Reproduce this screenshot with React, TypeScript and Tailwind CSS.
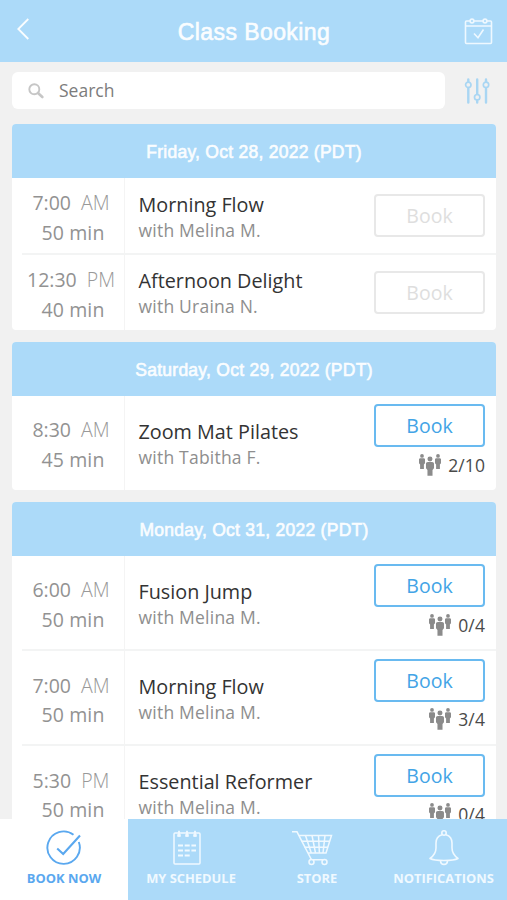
import React from 'react';

type Session = { time: string; half: string; mins: string; name: string; coach: string; spots?: string };
type Day = { title: string; sessions: Session[] };

const days: Day[] = [
  {
    title: 'Friday, Oct 28, 2022 (PDT)',
    sessions: [
      { time: '7:00', half: 'AM', mins: '50 min', name: 'Morning Flow', coach: 'with Melina M.' },
      { time: '12:30', half: 'PM', mins: '40 min', name: 'Afternoon Delight', coach: 'with Uraina N.' },
    ],
  },
  {
    title: 'Saturday, Oct 29, 2022 (PDT)',
    sessions: [{ time: '8:30', half: 'AM', mins: '45 min', name: 'Zoom Mat Pilates', coach: 'with Tabitha F.', spots: '2/10' }],
  },
  {
    title: 'Monday, Oct 31, 2022 (PDT)',
    sessions: [
      { time: '6:00', half: 'AM', mins: '50 min', name: 'Fusion Jump', coach: 'with Melina M.', spots: '0/4' },
      { time: '7:00', half: 'AM', mins: '50 min', name: 'Morning Flow', coach: 'with Melina M.', spots: '3/4' },
      { time: '5:30', half: 'PM', mins: '50 min', name: 'Essential Reformer', coach: 'with Melina M.', spots: '0/4' },
    ],
  },
];

function Person() {
  return (
    <>
      <circle cx="3" cy="1.9" r="1.9" />
      <path d="M1.400 4.200h3.200c.9 0 1.400.6 1.400 1.400v3.600L4.900 10.500V15H1.100v-4.500L0 9.200V5.600c0-.8.5-1.400 1.400-1.400z" />
    </>
  );
}

function PeopleIcon() {
  return (
    <svg className="h-[22px] w-[22px] shrink-0" viewBox="0 0 22 22" fill="#8b8b8b">
      <Person />
      <g transform="translate(16 0)">
        <Person />
      </g>
      <g transform="translate(7 2.600) scale(1.330 1.270)">
        <Person />
      </g>
    </svg>
  );
}

function Row({ s, first }: { s: Session; first: boolean }) {
  const open = Boolean(s.spots);
  const height = open ? (first ? 'h-[94px]' : 'h-[95px]') : 'h-[76px]';
  const buttonTop = open ? (first ? 'pt-2' : 'pt-[9px]') : first ? 'pt-4' : 'pt-[17px]';
  return (
    <div className={`relative flex ${height}`}>
      {!first && <div className="absolute top-[-1px] right-0 left-[10px] h-0.5 bg-[#f3f4f4]" />}
      <div
        className={`flex w-[113px] shrink-0 flex-col items-center justify-center border-r border-[#f4f4f4] pl-[10px] text-[19.5px] leading-[29.5px] text-[#929292] ${
          first ? 'pt-[3px]' : 'pt-[5px]'
        }`}
      >
        <div className="-ml-1 flex gap-[10px]">
          <span>{s.time}</span>
          <span className="font-light text-[#999]">{s.half}</span>
        </div>
        <div className="tracking-[0.1px]">{s.mins}</div>
      </div>
      <div className={`flex min-w-0 flex-1 flex-col justify-center pl-[13.5px] ${first ? 'pt-px' : 'pt-[2px]'}`}>
        <div className="text-[19.8px] leading-[26px] whitespace-nowrap text-[#333]">{s.name}</div>
        <div className="text-[17.5px] leading-[24px] tracking-[0.22px] whitespace-nowrap text-[#8e8e8e]">{s.coach}</div>
      </div>
      <div className={`flex w-[122px] shrink-0 flex-col items-end pr-[11px] ${buttonTop}`}>
        <button
          className={`flex h-[43px] w-[111px] shrink-0 items-center justify-center rounded-[4px] border-2 pt-px text-[19.5px] ${
            open ? 'border-[#69baf0] text-[#43a4e6]' : 'border-[#e8e8e8] text-[#dedede]'
          }`}
        >
          Book
        </button>
        {open && (
          <div
            className={`flex gap-[7px] text-[17.5px] leading-[22px] tracking-[0.1px] text-[#4a4a4a] ${first ? 'mt-[7px]' : 'mt-[6px]'}`}
          >
            <PeopleIcon />
            <span>{s.spots}</span>
          </div>
        )}
      </div>
    </div>
  );
}

const helv = "font-['Liberation_Sans',Arial,sans-serif] text-[#fafdff] [-webkit-text-stroke:0.6px_#fafdff]";

function NavLabel({ children }: { children: React.ReactNode }) {
  return <span className="mt-[3px] text-[12.9px] leading-4 font-bold whitespace-nowrap">{children}</span>;
}

export default function App() {
  return (
    <div className="flex h-[900px] w-[507px] flex-col overflow-hidden bg-[#f1f1f1] font-['Open_Sans','Noto_Sans',sans-serif]">
      <header className="flex h-[62px] shrink-0 items-center justify-between bg-[#acdaf9] pr-[14px] pl-[16px]">
        <svg className="-mt-[5px] h-[22px] w-[28px]" viewBox="0 0 28 22" fill="none" stroke="#fafdff" strokeWidth="1.8">
          <path d="M12.300 1 2.300 11l10 10" />
        </svg>
        <h1 className={`pt-[3px] text-[23px] tracking-[0.42px] ${helv}`}>Class Booking</h1>
        <svg className="h-[28px] w-[29px]" viewBox="0 0 29 28" fill="none" stroke="#eef8ff" strokeWidth="1.6">
          <path d="M6 4H2.500Q1.500 4 1.500 5v20.500Q1.500 26.500 2.500 26.500h24q1 0 1-1V5q0-1-1-1H23M10 4h9M1.500 9h26" />
          <circle cx="8" cy="4" r="1.900" />
          <circle cx="21" cy="4" r="1.900" />
          <path d="m10 16.500 4 4.200 5.500-8.200" />
        </svg>
      </header>
      <div className="flex h-[62px] shrink-0 items-center justify-between pr-[17px] pb-[5px] pl-3">
        <div className="flex h-[37px] w-[433px] items-center rounded-[6px] bg-white pl-4">
          <svg className="h-4 w-4" viewBox="0 0 16 16" fill="none" stroke="#c6c6c6">
            <circle cx="6.300" cy="6.300" r="5" strokeWidth="1.900" />
            <path d="m10 10 4.300 4" strokeWidth="2.600" strokeLinecap="round" />
          </svg>
          <span className="ml-[15px] text-[17.500px] text-[#7c7c7c]">Search</span>
        </div>
        <svg className="h-[26px] w-[26px]" viewBox="0 0 26 26" fill="none" stroke="#a9d6f3" strokeWidth="2.400" strokeLinecap="round">
          <path d="M4.300 1.500v2M4.300 10v14.500M13.200 1.500V16M13.200 22.500v2M22 1.500v2M22 10v14.500" />
          <g strokeWidth="1.700">
            <circle cx="4.300" cy="6.800" r="2.700" />
            <circle cx="13.200" cy="19.200" r="2.700" />
            <circle cx="22" cy="6.800" r="2.700" />
          </g>
        </svg>
      </div>
      <main className="flex min-h-0 flex-1 flex-col gap-3 overflow-hidden pr-[11px] pl-3">
        {days.map((d) => (
          <section key={d.title} className="shrink-0 overflow-hidden rounded-[4px] bg-white">
            <h2 className={`flex h-[54px] items-center justify-center bg-[#acdaf9] pt-[2px] text-[17.500px] tracking-[0.26px] ${helv}`}>{d.title}</h2>
            {d.sessions.map((s, i) => (
              <Row key={s.time} s={s} first={i === 0} />
            ))}
          </section>
        ))}
      </main>
      <nav className="flex h-[81px] shrink-0 bg-[#acdaf9] text-[#f0f9ff]">
        <div className="flex w-[128px] flex-col items-center bg-white pt-[11px] text-[#5aa8ef]">
          <svg className="h-[37px] w-[36px]" viewBox="0 0 36 37" fill="none" stroke="currentColor" strokeWidth="1.900">
            <path d="M27.500 4.800A16.200 16.200 0 1 0 32.800 12" />
            <path d="m11.200 18.500 6 5.500L34 5.500" strokeWidth="2.100" />
          </svg>
          <NavLabel>BOOK NOW</NavLabel>
        </div>
        <div className="flex w-[126px] flex-col items-center pt-[11px]">
          <svg className="-ml-[8px] h-[37px] w-[30px]" viewBox="0 0 30 37" fill="none" stroke="currentColor" strokeWidth="1.500">
            <rect x="2" y="3" width="26" height="31" rx="1" />
            <path d="M7 .8v6M15 .8v6M23 .8v6" strokeWidth="1.800" />
            <path d="M5.200 5.500h3.600M13.200 5.500h3.600M21.200 5.500h3.600" strokeWidth="2.600" />
            <path d="M6 15.500h5M12.700 15.500h5M19.400 15.500H24M6 20.500h5M12.700 20.500h5M19.400 20.500H24M6 25.500h5M12.700 25.500h5" strokeWidth="2" />
          </svg>
          <NavLabel>MY SCHEDULE</NavLabel>
        </div>
        <div className="flex w-[126px] flex-col items-center pt-[11px]">
          <svg className="-ml-[10px] h-[37px] w-[42px]" viewBox="0 0 42 37" fill="none" stroke="currentColor" strokeWidth="1.500">
            <path d="M1 1.800h5l14.500 28H35M8 5.500h32.500L35 23H17" />
            <path d="M10.500 11.300h28M13.500 17.200h23.500M14.500 5.500l5.800 17.500M21 5.500l3.500 17.500M27.500 5.500l.9 17.500M34 5.500l-2 17.500" />
            <circle cx="20.500" cy="32" r="2.500" fill="#acdaf9" />
            <circle cx="33.500" cy="32" r="2.500" fill="#acdaf9" />
          </svg>
          <NavLabel>STORE</NavLabel>
        </div>
        <div className="flex w-[127px] flex-col items-center pt-[11px]">
          <svg className="h-[37px] w-[32px]" viewBox="0 0 32 37" fill="none" stroke="currentColor" strokeWidth="1.600" strokeLinejoin="round">
            <circle cx="16" cy="3" r="2.200" />
            <path d="M14 4.700C9.500 6 8 9 8 13v5c0 4.500-2 7.500-6 10.500 3 1.600 8 2 14 2s11-.4 14-2c-4-3-6-6-6-10.500v-5c0-4-1.500-7-6-8.300" />
            <path d="M12.500 30.500c0 5.200 7 5.200 7 0" />
          </svg>
          <NavLabel>NOTIFICATIONS</NavLabel>
        </div>
      </nav>
    </div>
  );
}
